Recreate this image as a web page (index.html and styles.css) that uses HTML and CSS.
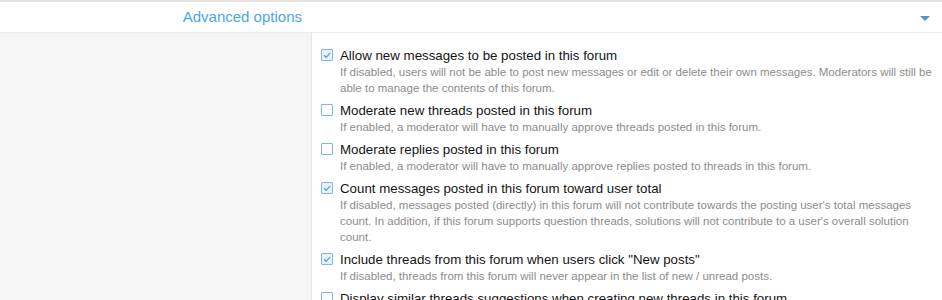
FILE: index.html
```html
<!DOCTYPE html>
<html>
<head>
<meta charset="utf-8">
<link rel="stylesheet" href="styles.css">
</head>
<body>
<div class="block">
  <div class="header">
    <div class="header-title">Advanced options</div>
    <div class="header-toggle"><span class="caret"></span></div>
  </div>
  <div class="row">
    <div class="row-label"></div>
    <div class="row-input">
      <ul class="choices">
        <li class="choice">
          <span class="box checked"><svg viewBox="0 0 10 10" width="10" height="10"><path d="M2 5.2 L4.2 7.3 L8.2 2.8" fill="none" stroke="#4f9fd9" stroke-width="1.2"/></svg></span>
          <div class="choice-body">
            <div class="choice-label">Allow new messages to be posted in this forum</div>
            <div class="choice-hint">If disabled, users will not be able to post new messages or edit or delete their own messages. Moderators will still be able to manage the contents of this forum.</div>
          </div>
        </li>
        <li class="choice">
          <span class="box"></span>
          <div class="choice-body">
            <div class="choice-label">Moderate new threads posted in this forum</div>
            <div class="choice-hint">If enabled, a moderator will have to manually approve threads posted in this forum.</div>
          </div>
        </li>
        <li class="choice">
          <span class="box"></span>
          <div class="choice-body">
            <div class="choice-label">Moderate replies posted in this forum</div>
            <div class="choice-hint">If enabled, a moderator will have to manually approve replies posted to threads in this forum.</div>
          </div>
        </li>
        <li class="choice">
          <span class="box checked"><svg viewBox="0 0 10 10" width="10" height="10"><path d="M2 5.2 L4.2 7.3 L8.2 2.8" fill="none" stroke="#4f9fd9" stroke-width="1.2"/></svg></span>
          <div class="choice-body">
            <div class="choice-label">Count messages posted in this forum toward user total</div>
            <div class="choice-hint">If disabled, messages posted (directly) in this forum will not contribute towards the posting user's total messages count. In addition, if this forum supports question threads, solutions will not contribute to a user's overall solution count.</div>
          </div>
        </li>
        <li class="choice">
          <span class="box checked"><svg viewBox="0 0 10 10" width="10" height="10"><path d="M2 5.2 L4.2 7.3 L8.2 2.8" fill="none" stroke="#4f9fd9" stroke-width="1.2"/></svg></span>
          <div class="choice-body">
            <div class="choice-label">Include threads from this forum when users click "New posts"</div>
            <div class="choice-hint">If disabled, threads from this forum will never appear in the list of new / unread posts.</div>
          </div>
        </li>
        <li class="choice">
          <span class="box"></span>
          <div class="choice-body">
            <div class="choice-label">Display similar threads suggestions when creating new threads in this forum</div>
            <div class="choice-hint">If enabled, similar threads will be suggested to users when they create a new thread.</div>
          </div>
        </li>
      </ul>
    </div>
  </div>
</div>
</body>
</html>
```

FILE: styles.css
```css
* { box-sizing: border-box; }
html, body { margin: 0; padding: 0; }
body {
  font-family: "Liberation Sans", Arial, sans-serif;
  background: #fff;
  color: #141414;
  overflow: hidden;
}
.block {
  border-top: 2px solid #e4e4e4;
}
.header {
  display: flex;
  align-items: center;
  height: 31px;
  background: #fff;
  border-bottom: 1px solid #ececec;
}
.header-title {
  width: 312px;
  text-align: right;
  padding-right: 10px;
  font-size: 15px;
  color: #4aa7e6;
  margin-top: -2px;
}
.header-toggle {
  flex: 1;
  display: flex;
  justify-content: flex-end;
  padding-right: 12px;
}
.caret {
  width: 0;
  height: 0;
  border-left: 5px solid transparent;
  border-right: 5px solid transparent;
  border-top: 5px solid #4b93d6;
  margin-top: 2px;
}
.row {
  display: flex;
  min-height: 300px;
}
.row-label {
  width: 312px;
  flex: none;
  background: #f5f5f5;
  border-right: 1px solid #e6e6e6;
}
.row-input {
  flex: 1;
  padding: 14px 1px 0 9px;
}
.choices {
  list-style: none;
  margin: 0;
  padding: 0;
}
.choice {
  display: flex;
  align-items: flex-start;
  margin-bottom: 6px;
}
.box {
  flex: none;
  width: 12px;
  height: 12px;
  margin-top: 2px;
  margin-right: 7px;
  border: 1px solid #7ab8e6;
  border-radius: 1px;
  background: #fff;
  display: flex;
  align-items: center;
  justify-content: center;
}
.box.checked {
  background: #e8f2fb;
}
.choice-body {
  flex: 1;
}
.choice-label {
  font-size: 13.3px;
  line-height: 17px;
  color: #141414;
}
.choice-hint {
  font-size: 11.5px;
  line-height: 16px;
  color: #8c8c8c;
}
```
